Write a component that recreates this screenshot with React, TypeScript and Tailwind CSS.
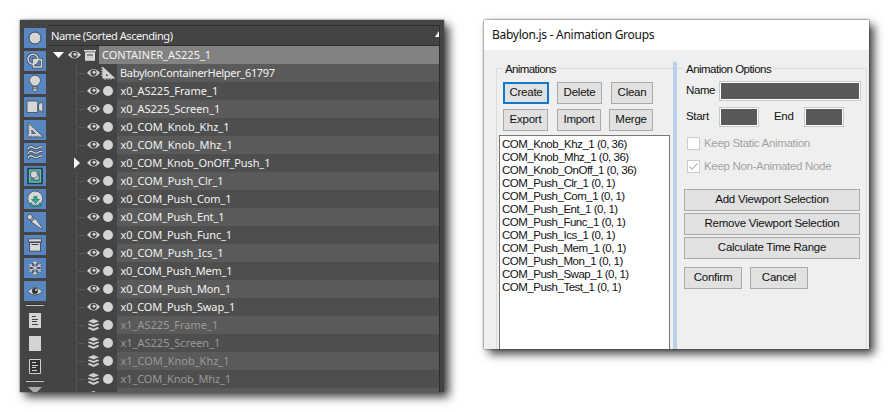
import React from "react";

const I = "#d6d6d6";
const D = "#3a4656";

const Shape = ({ n }: { n: number }) => {
  switch (n) {
    case 0:
      return <circle cx="11" cy="10" r="6" fill={I} stroke={D} strokeWidth="1" />;
    case 1:
      return (
        <g fill="none">
          <circle cx="9" cy="8.2" r="5" stroke={D} strokeWidth="3" />
          <path d="M9.500 8.500h8v7.500h-8z" stroke={D} strokeWidth="3" />
          <path d="M9.500 8.500h4.500a5 5 0 0 1-4.500 4.700z" fill={I} />
          <circle cx="9" cy="8.2" r="5" stroke={I} strokeWidth="1.500" />
          <path d="M9.500 8.500h8v7.500h-8z" stroke={I} strokeWidth="1.500" />
        </g>
      );
    case 2:
      return (
        <g stroke={D} strokeWidth=".8" fill={I}>
          <path d="M8.500 12C8 10 5.500 9 5.500 6.700a5.500 5.500 0 0 1 11 0c0 2.300-2.500 3.300-3 5.300z" />
          <path d="M8.700 13h4.600v3l-1.500 1.600h-1.600l-1.500-1.600z" />
          <path d="M9 14.800h4" />
        </g>
      );
    case 3:
      return (
        <g stroke={D} strokeWidth=".8" fill={I}>
          <path d="M3 4h10.700v11.500H3zM14.500 7.500l4.300-3v11l-4.300-3z" />
        </g>
      );
    case 4:
      return (
        <g>
          <path d="M4 2.500v14.500h15zM7.800 10v3.500h3.700z" fill={I} fillRule="evenodd" stroke={D} strokeWidth=".7" />
          <path d="M4 5.500h1.500M4 8h1.500M4 10.500h1.500M4 13h1.500M7 17v-1.500M10 17v-1.500M13 17v-1.500" stroke={D} strokeWidth=".8" />
        </g>
      );
    case 5:
      return (
        <g fill="none" strokeLinecap="round">
          <path d="M4 6q2-3.500 5-1.500t5 .5 4-1M4 10.500q2-3.500 5-1.500t5 .5 4-1M4 15q2-3.500 5-1.500t5 .5 4-1" stroke={D} strokeWidth="2.800" />
          <path d="M4 6q2-3.500 5-1.500t5 .5 4-1M4 10.500q2-3.500 5-1.500t5 .5 4-1M4 15q2-3.500 5-1.500t5 .5 4-1" stroke={I} strokeWidth="1.300" />
        </g>
      );
    case 6:
      return (
        <g>
          <path d="M4 2.500h14v15H4z" fill="#508f9d" stroke="#263f45" strokeWidth="1.600" />
          <path d="M5.500 4h11v12h-11z" fill="none" stroke="#61c4b2" />
          <path d="M9.500 8.500h5.500v5.500H9.500z" fill={I} stroke={D} strokeWidth=".8" />
          <circle cx="10" cy="8.500" r="3.700" fill={I} stroke={D} strokeWidth=".7" />
        </g>
      );
    case 7:
      return (
        <g>
          <circle cx="11.200" cy="9.500" r="7.500" fill={I} stroke={D} strokeWidth=".8" />
          <path d="M6.500 14v3.500h10V14h-1.500v2h-7v-2z" fill="#2fae94" stroke="#285b58" strokeWidth=".6" />
          <path d="M10 7.500h3v3h2.500l-4 4-4-4H10z" fill="#2fae94" stroke="#285b58" strokeWidth=".6" />
        </g>
      );
    case 8:
      return (
        <g fill={I} stroke={D} strokeWidth=".8">
          <path d="M7 9.800l4.300-3.500 7 9.700-.8 1.200z" />
          <path d="M5.800 7.800l3-2.500 1.200 1.500-3 2.500z" />
          <circle cx="5.800" cy="5" r="2.600" />
        </g>
      );
    case 9:
      return (
        <g>
          <path d="M4.500 3.800h13v3.400h-13zM5.500 7.200h11v9h-11z" fill={I} stroke={D} strokeWidth=".9" />
          <path d="M5.500 7.400h11M7.500 9.500h7" stroke={D} strokeWidth="1" />
        </g>
      );
    case 10:
      return (
        <g fill="none">
          <path d="M11 3v14M5 6.500l12 7M5 13.500l12-7M9 4l2 2 2-2M9 16l2-2 2 2M5 9l2.500-1L7 5.500M17 9l-2.500-1L15 5.500M5 11l2.500 1-.5 2.500M17 11l-2.500 1 .5 2.500" stroke={D} strokeWidth="2.600" />
          <path d="M11 3v14M5 6.500l12 7M5 13.500l12-7M9 4l2 2 2-2M9 16l2-2 2 2M5 9l2.500-1L7 5.500M17 9l-2.500-1L15 5.500M5 11l2.500 1-.5 2.500M17 11l-2.500 1 .5 2.500" stroke={I} strokeWidth="1.100" />
        </g>
      );
    default:
      return (
        <g>
          <path d="M3.500 10.500Q11 2.500 18.500 10.500 11 17.500 3.500 10.500z" fill={I} stroke={D} strokeWidth=".8" />
          <circle cx="11" cy="10" r="3" fill="#333" />
          <circle cx="12" cy="9" r=".9" fill="#eee" />
        </g>
      );
  }
};

const Eye = () => (
  <svg className="h-3 w-[13px] shrink-0" viewBox="0 0 13 12">
    <path d="M0 6Q6.500-2 13 6 6.500 13 0 6z" fill="#d4d4d4" />
    <circle cx="6.500" cy="5.700" r="3.100" fill="#444" />
    <circle cx="7" cy="5.200" r="1.500" fill="#d4d4d4" />
  </svg>
);

const Layers = () => (
  <svg className="h-3 w-[13px] shrink-0" viewBox="0 0 13 12">
    <path d="M6.500 0l5.500 2.200-5.500 2.300L1 2.200zM1 5l1.500-.6 4 1.600 4-1.600L12 5v.8L6.500 8 1 5.800zM1 8.700l1.500-.6 4 1.600 4-1.600 1.500.6v.8L6.500 12 1 9.500z" fill="#d0d0d0" />
  </svg>
);

const Ruler = () => (
  <svg className="ml-px h-3.5 w-[15px] shrink-0" viewBox="0 0 15 14">
    <path d="M1.500 .500v12H14.500zM5 7.800v2.200h2.500z" fill="#d4d4d4" fillRule="evenodd" />
    <path d="M0 2h2M0 4.500h2M0 7h2M0 9.500h2M4 14v-2M7 14v-2M10 14v-2" stroke="#d4d4d4" strokeWidth=".8" />
  </svg>
);

const rows: [string, string][] = [
  ["BabylonContainerHelper_61797", "pl-[3px] tracking-[-0.32px]"],
  ["x0_AS225_Frame_1", "pl-[3.5px]"],
  ["x0_AS225_Screen_1", "pl-[3.5px]"],
  ["x0_COM_Knob_Khz_1", "pl-[3.5px]"],
  ["x0_COM_Knob_Mhz_1", "pl-[3.5px]"],
  ["x0_COM_Knob_OnOff_Push_1", "pl-[3.5px] tracking-[-0.1px]"],
  ["x0_COM_Push_Clr_1", "pl-[3.5px]"],
  ["x0_COM_Push_Com_1", "pl-[3.5px] tracking-[-0.1px]"],
  ["x0_COM_Push_Ent_1", "pl-[3.5px] tracking-[-0.1px]"],
  ["x0_COM_Push_Func_1", "pl-[3.5px] tracking-[-0.1px]"],
  ["x0_COM_Push_Ics_1", "pl-[3.5px]"],
  ["x0_COM_Push_Mem_1", "pl-[3.5px] tracking-[-0.2px]"],
  ["x0_COM_Push_Mon_1", "pl-[3.5px] tracking-[-0.1px]"],
  ["x0_COM_Push_Swap_1", "pl-[3.5px] tracking-[-0.1px]"],
  ["x1_AS225_Frame_1", "pl-[3.5px]"],
  ["x1_AS225_Screen_1", "pl-[3.5px]"],
  ["x1_COM_Knob_Khz_1", "pl-[3.5px]"],
  ["x1_COM_Knob_Mhz_1", "pl-[3.5px] tracking-[-0.1px]"],
  ["", ""],
];

const anims = [
  "COM_Knob_Khz_1 (0, 36)",
  "COM_Knob_Mhz_1 (0, 36)",
  "COM_Knob_OnOff_1 (0, 36)",
  "COM_Push_Clr_1 (0, 1)",
  "COM_Push_Com_1 (0, 1)",
  "COM_Push_Ent_1 (0, 1)",
  "COM_Push_Func_1 (0, 1)",
  "COM_Push_Ics_1 (0, 1)",
  "COM_Push_Mem_1 (0, 1)",
  "COM_Push_Mon_1 (0, 1)",
  "COM_Push_Swap_1 (0, 1)",
  "COM_Push_Test_1 (0, 1)",
];

const Btn = ({ label, w, focus }: { label: string; w: string; focus?: boolean }) => (
  <button
    className={`flex h-[22px] shrink-0 items-center justify-center whitespace-nowrap bg-[#e1e1e1] tracking-[-0.24px] ${w} ${
      focus ? "border-2 border-[#1079cb]" : "border border-[#aaa]"
    }`}
  >
    {label}
  </button>
);

const Explorer = () => (
  <div className="flex h-[372px] w-[424px] shrink-0 overflow-hidden bg-[#444] font-['Noto_Sans',sans-serif] text-[11px] text-[#f2f2f2]">
    <div className="flex w-[29px] shrink-0 flex-col pl-1 pt-2">
      <div className="flex flex-col gap-[3px]">
        {Array.from({ length: 12 }, (_, n) => (
          <svg key={n} className="block h-5 w-[22px] bg-[#5786c0]" viewBox="0 0 22 20">
            <Shape n={n} />
          </svg>
        ))}
      </div>
      <svg className="block h-[91px] w-[22px]" viewBox="0 0 22 91">
        <path d="M2 4.500h18M2 80.500h18" stroke="#c4c4c4" />
        <path d="M2 3.500h18M2 79.500h18" stroke="#333" />
        <path d="M5 12h12v15H5zM5 35h12v15H5z" fill="#d4d4d4" />
        <path d="M8 15.500h4M8 18.500h6M8 20.500h5M8 23.500h6" stroke="#444" />
        <path d="M5.500 58.500h11v14h-11z" fill="#333" stroke="#d0d0d0" />
        <path d="M8 61.500h4M8 64.500h6M8 66.500h4M8 69.500h5" stroke="#d4d4d4" />
        <path d="M4 86h14l-5 5H9z" fill="#aaa" />
      </svg>
    </div>
    <div className="mt-[5px] flex w-[391px] shrink-0 flex-col border-r border-t border-[#2e2e2e]">
      <div className="flex h-5 shrink-0 items-center justify-between border-b border-[#2e2e2e] pl-0.5">
        <span className="text-[11.2px] leading-[18px] tracking-[-0.52px]">Name (Sorted Ascending)</span>
        <svg className="mb-1 h-1.5 w-1" viewBox="0 0 4 6">
          <path d="M4 0v6H0z" fill="#fff" />
        </svg>
      </div>
      <div className="flex h-[18px] shrink-0 items-center">
        <svg className="ml-1 h-1.5 w-[11px]" viewBox="0 0 11 6">
          <path d="M0 0h11L5.500 6z" fill="#fff" />
        </svg>
        <span className="ml-1 flex">
          <Eye />
        </span>
        <svg className="ml-[3px] h-[11px] w-3" viewBox="0 0 12 11">
          <path d="M0 .800h12M1.800 3v7h8.500V3z" stroke="#ddd" strokeWidth="1.400" fill="#ccc" />
          <path d="M3 5h6" stroke="#444" />
        </svg>
        <div className="ml-[3px] h-[18px] grow bg-[#828282] pl-[3px] leading-[18px]">CONTAINER_AS225_1</div>
      </div>
      {rows.map(([name, fit], i) => (
        <div key={i} className="flex h-[18px] shrink-0 items-center">
          <div className="flex h-[18px] w-[38px] shrink-0 items-center pl-[25px]">
            {i === 5 ? (
              <svg className="h-3 w-3" viewBox="0 0 12 12">
                <path d="M0 .500l6 5.500-6 5.500z" fill="#fff" />
              </svg>
            ) : (
              <svg className="h-[18px] w-3" viewBox="0 0 12 18">
                <path d="M2.500 0v18M4 9.500h7" stroke="#666" strokeDasharray="1 1" fill="none" />
              </svg>
            )}
          </div>
          {i < 14 ? <Eye /> : <Layers />}
          {i === 0 ? (
            <Ruler />
          ) : (
            <span className="ml-[3px] size-2.5 shrink-0 rounded-full bg-[#d4d4d4]" />
          )}
          <div
            className={`ml-auto h-[18px] w-[322px] shrink-0 whitespace-nowrap leading-[18px] ${fit} ${
              i % 2 ? "bg-[#4e4e4e]" : "bg-[#5a5a5a]"
            } ${i >= 14 ? "text-[#999]" : ""}`}
          >
            {name}
          </div>
        </div>
      ))}
    </div>
  </div>
);

const Check = ({ label, on }: { label: string; on?: boolean }) => (
  <div className="flex h-[13px] items-center gap-1 text-[#a3a3a3]">
    <svg className="size-[13px] shrink-0 border border-[#ccc] bg-white" viewBox="0 0 11 11">
      {on && <path d="M1.500 5.500l2.500 2.700L9.500 2.500" fill="none" stroke="#bbb" strokeWidth="1.200" />}
    </svg>
    <span className="whitespace-nowrap tracking-[-0.32px]">{label}</span>
  </div>
);

const Dark = ({ w }: { w: string }) => (
  <div className={`h-5 shrink-0 border border-[#c8c8c8] bg-[#595959] p-px shadow-[inset_0_0_0_1px_#fff] ${w}`} />
);

const Dialog = () => (
  <div className="flex h-[329px] w-[385px] shrink-0 flex-col overflow-hidden bg-[#efefef] font-['Liberation_Sans',sans-serif] text-[11.5px] text-[#111]">
    <div className="flex h-[30px] shrink-0 items-center bg-white pl-2 font-['Noto_Sans',sans-serif] text-[12px] tracking-[-0.28px]">
      Babylon.js - Animation Groups
    </div>
    <div className="flex grow pt-3">
      <div className="ml-3 w-[177px] shrink-0">
        <div className="mt-1.5 h-[281px] border-l border-t border-[#dcdcdc]">
          <div className="-mt-[7px] ml-1.5 w-fit bg-[#efefef] px-0.5 leading-[14px] tracking-[-0.6px]">Animations</div>
          <div className="ml-1.5 mt-1.5 flex">
            <Btn label="Create" w="w-[46px]" focus />
            <Btn label="Delete" w="ml-2 w-[45px]" />
            <Btn label="Clean" w="ml-[9px] w-[42px]" />
          </div>
          <div className="ml-1.5 mt-[5px] flex">
            <Btn label="Export" w="w-[45px]" />
            <Btn label="Import" w="ml-[9px] w-[44px]" />
            <Btn label="Merge" w="ml-2 w-[44px]" />
          </div>
          <div className="ml-0.5 mt-1 h-[220px] w-[171px] border border-[#777] bg-white pl-0.5 pt-0.5 tracking-[-0.49px]">
            {anims.map((a) => (
              <div key={a} className="h-[13px] whitespace-nowrap leading-[13px]">
                {a}
              </div>
            ))}
          </div>
        </div>
      </div>
      <div className="w-1 shrink-0 bg-[#bdd0e7]" />
      <div className="mt-1.5 h-[281px] w-[190px] shrink-0 border-r border-t border-[#dcdcdc] pl-[7px]">
        <div className="-mt-[7px] w-fit bg-[#efefef] px-0.5 leading-[14px] tracking-[-0.52px]">Animation Options</div>
        <div className="mt-[5px] flex items-center tracking-[-0.4px]">
          <span className="w-[35px] shrink-0 pl-0.5">Name</span>
          <Dark w="w-[142px]" />
        </div>
        <div className="mt-1.5 flex items-center tracking-[-0.3px]">
          <span className="w-[35px] shrink-0 pl-0.5">Start</span>
          <Dark w="w-10" />
          <span className="w-[45px] shrink-0 pl-[15px]">End</span>
          <Dark w="w-10" />
        </div>
        <div className="ml-[3px] mt-2.5 flex flex-col gap-2.5">
          <Check label="Keep Static Animation" />
          <Check label="Keep Non-Animated Node" on />
        </div>
        <div className="mt-4 flex flex-col gap-0.5">
          <Btn label="Add Viewport Selection" w="w-[176px]" />
          <Btn label="Remove Viewport Selection" w="w-[176px]" />
          <Btn label="Calculate Time Range" w="w-[176px]" />
        </div>
        <div className="mt-2 flex gap-2">
          <Btn label="Confirm" w="w-[58px]" />
          <Btn label="Cancel" w="w-[58px]" />
        </div>
      </div>
    </div>
  </div>
);

export default function App() {
  return (
    <div className="flex h-[412px] w-[889px] items-start gap-10 overflow-hidden bg-white pl-5 pt-5">
      <div className="shadow-[0_0_2px_#555,5px_5px_9px_rgba(0,0,0,0.75)]">
        <Explorer />
      </div>
      <div className="shadow-[0_0_2px_#333,5px_5px_9px_rgba(0,0,0,0.75)]">
        <Dialog />
      </div>
    </div>
  );
}
